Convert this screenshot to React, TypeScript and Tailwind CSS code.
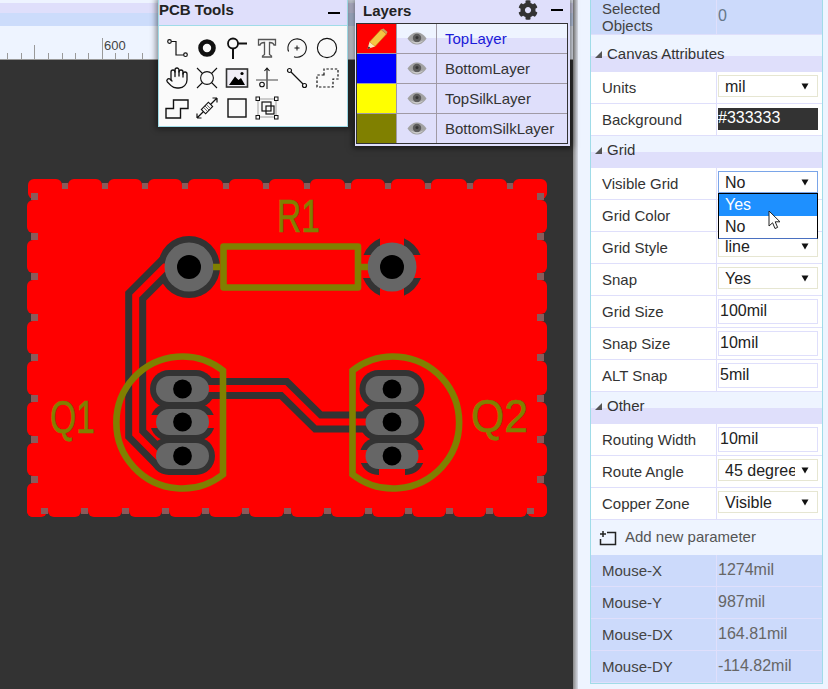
import { Hand } from "lucide-react"
import { FaCog } from "react-icons/fa"
import type { ReactNode } from "react"

const silk = "#808000"
const clearance = "#333333"
const copper = "#ff0000"
const gapColor = "#8a5a5a"

const topGaps = [62, 102, 142, 182, 223, 263, 304, 345, 385, 425, 467, 507]
const bottomGaps = [41, 81, 122, 162, 202, 242, 284, 324, 365, 405, 446, 486, 527]
const sideGaps = [193, 233, 273, 314, 354, 395, 436, 476]

const trackA = "M189 267H164.7L135.7 296V434L157.5 456H182"
const trackB = "M182 388.5H284L318 422H392"

function Icon({ children }: { children: ReactNode }) {
  return (
    <svg width="24" height="24" viewBox="0 0 24 24" fill="none" stroke="#111" strokeWidth="1.2">
      {children}
    </svg>
  )
}

const tools: ReactNode[] = [
  <Icon key="route">
    <circle cx="4.5" cy="5.5" r="1.8" />
    <path d="M6.3 5.5H11V19H18.7" />
    <circle cx="20.5" cy="18.7" r="1.8" />
  </Icon>,
  <Icon key="via">
    <circle cx="12" cy="12" r="6.5" strokeWidth="4.6" />
  </Icon>,
  <Icon key="pad">
    <circle cx="8" cy="7.5" r="5" strokeWidth="1.8" />
    <path d="M13 7.5H22M8 12.5V23" strokeWidth="2" />
  </Icon>,
  <Icon key="text">
    <path d="M3.5 3.5H20.5V9H19C18.5 7 17.5 6.5 14.5 6.5V18.5L16.5 20V21H7.5V20L9.5 18.5V6.5C6.5 6.5 5.5 7 5 9H3.5Z" stroke="#555" strokeWidth="1.3" />
  </Icon>,
  <Icon key="arc">
    <path d="M3.6 15.5A9.2 9.2 0 1 1 9 20.7" strokeWidth="1.1" />
    <path d="M12 9.5V14.5M9.5 12H14.5" strokeWidth="1" />
  </Icon>,
  <Icon key="circle">
    <circle cx="12" cy="12" r="9.6" strokeWidth="1.1" />
  </Icon>,
  <Hand key="hand" size={24} strokeWidth={1.3} color="#111" />,
  <Icon key="hole">
    <circle cx="12" cy="12" r="6.4" strokeWidth="1.1" />
    <path d="M2 2L7.5 7.5M22 2L16.5 7.5M2 22L7.5 16.5M22 22L16.5 16.5" strokeWidth="1.1" />
  </Icon>,
  <Icon key="image">
    <rect x="1.5" y="3" width="21" height="18" fill="#f0eef6" stroke="#333" strokeWidth="1.6" />
    <path d="M4 19L10 10.5L13.5 14L16 12L20 19Z" fill="#000" stroke="none" />
    <circle cx="17" cy="7.5" r="1.6" fill="#000" stroke="none" />
  </Icon>,
  <Icon key="dimension">
    <path d="M12 2V23M9.5 5L12 2L14.5 5" strokeWidth="1.1" />
    <path d="M1 14H23" stroke="#666" strokeWidth="1.2" />
    <circle cx="7" cy="18.5" r="2.3" strokeWidth="1.1" />
  </Icon>,
  <Icon key="line">
    <circle cx="4.5" cy="4.5" r="2" />
    <path d="M6 6L18 18" />
    <circle cx="19.5" cy="19.5" r="2" />
  </Icon>,
  <Icon key="zone">
    <path d="M9 9V3H23V13H18V21H2V9Z" strokeDasharray="2.4 1.8" strokeWidth="1.2" />
  </Icon>,
  <Icon key="trace">
    <path d="M1 22V12.5H8.5V4H23V12.5H15.5V22Z" strokeWidth="1.4" />
  </Icon>,
  <Icon key="component">
    <path d="M2 22L22 2M2 22V17.5M2 22H6.5M22 2H17.5M22 2V6.5" strokeWidth="1.2" />
    <rect x="7" y="9" width="10" height="6" transform="rotate(-45 12 12)" fill="#fafafa" strokeWidth="1.1" />
    <path d="M10 10V14M12 9V15M14 10V14" transform="rotate(-45 12 12)" strokeWidth="0.9" stroke="#555" />
  </Icon>,
  <Icon key="rect">
    <rect x="3" y="3" width="18" height="18" strokeWidth="1.4" />
  </Icon>,
  <Icon key="group">
    <rect x="7" y="6" width="9" height="9" strokeWidth="1.2" />
    <rect x="11" y="10" width="8" height="8" strokeWidth="1.2" />
    <path d="M3 5V19M5 3H19M21 5V19M5 21H19" strokeWidth="0.7" stroke="#777" />
    <rect x="1" y="1" width="3.5" height="3.5" strokeWidth="1" fill="#fafafa" />
    <rect x="19.5" y="1" width="3.5" height="3.5" strokeWidth="1" fill="#fafafa" />
    <rect x="1" y="19.5" width="3.5" height="3.5" strokeWidth="1" fill="#fafafa" />
    <rect x="19.5" y="19.5" width="3.5" height="3.5" strokeWidth="1" fill="#fafafa" />
  </Icon>,
]

const layers = [
  { name: "TopLayer", color: "bg-[#ff0000]", active: true },
  { name: "BottomLayer", color: "bg-[#0000ff]" },
  { name: "TopSilkLayer", color: "bg-[#ffff00]" },
  { name: "BottomSilkLayer", color: "bg-[#808000]" },
]

function Eye() {
  return (
    <svg width="20" height="13" viewBox="0 0 20 13">
      <path d="M0.5 6.5C4 1.5 7 0.5 10 0.5S16 1.5 19.5 6.5C16 11.5 13 12.5 10 12.5S4 11.5 0.5 6.5Z" fill="#a2a2a2" />
      <circle cx="10" cy="6" r="4.2" fill="#5c5c5c" />
      <circle cx="10" cy="5.5" r="1.5" fill="#333" />
      <path d="M3 7.5C6 11 14 11 17 7.5C14 13 6 13 3 7.5Z" fill="#cfcfcf" />
    </svg>
  )
}

function Pencil() {
  return (
    <svg width="22" height="22" viewBox="0 0 22 22">
      <path d="M15 1.5L20.5 6L9 18.5L3.5 14Z" fill="#f5c542" stroke="#b8860b" strokeWidth="0.6" />
      <path d="M15 1.5L17.5 0.5L21.5 4L20.5 6Z" fill="#c9a25a" />
      <path d="M3.5 14L9 18.5L1.5 21Z" fill="#fbe7b5" />
      <path d="M2.6 18.5L4.5 20L1.5 21Z" fill="#222" />
    </svg>
  )
}

function Caret() {
  return (
    <svg width="8" height="7" viewBox="0 0 8 7" className="shrink-0">
      <path d="M0.5 0.5H7.5L4 6.5Z" fill="#111" />
    </svg>
  )
}

function SelectBox({ value, className = "border-[#e6e6d2]" }: { value: string; className?: string }) {
  return (
    <div className={`flex h-[22px] w-[100px] items-center justify-between border pl-[6px] pr-[8px] text-[16px] text-[#222] bg-white ${className}`}>
      <span className="block w-[70px] overflow-hidden whitespace-nowrap pt-[2px] leading-[18px]">{value}</span>
      <Caret />
    </div>
  )
}

function InputBox({ value }: { value: string }) {
  return (
    <div className="h-[25px] w-[100px] border border-[#dfdffb] bg-white pl-[1px] text-[16px] leading-[21px] text-[#222]">
      {value}
    </div>
  )
}

function Row({ label, children }: { label: string; children?: ReactNode }) {
  return (
    <div className="flex h-[32px] border-b border-[#dfdffb] bg-white">
      <div className="flex w-[126px] items-center border-r border-[#dfdffb] pl-[11px] pt-px text-[15px] text-[#333]">{label}</div>
      <div className="relative flex flex-1 items-start pl-[1px] pt-[3px]">{children}</div>
    </div>
  )
}

function Group({ label }: { label: string }) {
  return (
    <div className="relative h-[32px] bg-[linear-gradient(#eef4ff_50%,#dfdffb_50%)]">
      <div className="flex items-center gap-[5px] pl-[4px] pt-[6px] text-[15px] leading-[16px] text-[#333]">
        <svg width="7" height="7" viewBox="0 0 7 7">
          <path d="M7 0V7H0Z" fill="#555" />
        </svg>
        {label}
      </div>
    </div>
  )
}

function MouseRow({ label, value }: { label: string; value: string }) {
  return (
    <div className="flex h-[32px] border-b border-[#dfdffb] bg-[#ccdafb]">
      <div className="flex w-[126px] items-center border-r border-[#dfdffb] pl-[11px] pt-px text-[15px] text-[#444]">{label}</div>
      <div className="pl-px pt-[5px] text-[16px] leading-[20px] text-[#666]">{value}</div>
    </div>
  )
}

function Capsule({ cx, cy, grow, fill }: { cx: number; cy: number; grow: number; fill: string }) {
  return <rect x={cx - 26.5 - grow} y={cy - 13 - grow} width={53 + grow * 2} height={26 + grow * 2} rx={13 + grow} fill={fill} />
}

function Board() {
  return (
    <svg width="573" height="629" viewBox="0 60 573 629" className="block">
      <rect x="38" y="189" width="499" height="319" fill={copper} />
      {[28, ...topGaps.map((x) => x + 6)].map((x, i, all) => (
        <rect key={x} x={x} y="179" width={(all[i + 1] ?? 553) - x - 6} height="20" rx="6" fill={copper} />
      ))}
      {[27, ...bottomGaps.map((x) => x + 7)].map((x, i, all) => (
        <rect key={x} x={x} y="497" width={(all[i + 1] ?? 554) - x - 7} height="20" rx="6" fill={copper} />
      ))}
      {sideGaps.map((gap) => gap + 7).map((y, i, all) => (
        <g key={y}>
          <rect x="27" y={y} width="20" height={(all[i + 1] ?? 524) - y - 7} rx="6" fill={copper} />
          <rect x="527" y={y} width="20" height={(all[i + 1] ?? 524) - y - 7} rx="6" fill={copper} />
        </g>
      ))}
      {topGaps.map((x) => <rect key={x} x={x} y="183" width="6" height="6" fill={gapColor} />)}
      {bottomGaps.map((x) => <rect key={x} x={x} y="508" width="7" height="6" fill={gapColor} />)}
      {sideGaps.map((y) => (
        <g key={y}>
          <rect x="31" y={y} width="7" height="7" fill={gapColor} />
          <rect x="537" y={y} width="7" height="7" fill={gapColor} />
        </g>
      ))}

      {/* thermal pads sit under the solid clearances */}
      <circle cx="392" cy="267" r="31" fill={clearance} />
      <rect x="355" y="255" width="74" height="23" fill={copper} />
      <rect x="380" y="230" width="24" height="74" fill={copper} />
      <Capsule cx={182.5} cy={422} grow={6} fill={clearance} />
      <rect x="145" y="415" width="75" height="13" fill={copper} />
      <Capsule cx={392} cy={456} grow={6} fill={clearance} />
      <rect x="358" y="450" width="68" height="13" fill={copper} />
      <rect x="379" y="456" width="26" height="26" fill={copper} />

      {/* tracks */}
      <path d={trackA} fill="none" stroke={clearance} strokeWidth="21" />
      <path d={trackB} fill="none" stroke={clearance} strokeWidth="21" />
      <circle cx="189" cy="267" r="31" fill={clearance} />
      <Capsule cx={182.5} cy={389} grow={6} fill={clearance} />
      <Capsule cx={182.5} cy={456} grow={6} fill={clearance} />
      <Capsule cx={392} cy={389} grow={6} fill={clearance} />
      <Capsule cx={392} cy={422} grow={6} fill={clearance} />
      <path d={trackA} fill="none" stroke={copper} strokeWidth="7" />
      <path d={trackB} fill="none" stroke={copper} strokeWidth="7" />

      {/* pads */}
      {[189, 392].map((cx) => (
        <g key={cx}>
          <circle cx={cx} cy="267" r="24.5" fill="#666666" />
          <circle cx={cx} cy="267" r="12" fill="#000" />
        </g>
      ))}
      {[182.5, 392].map((cx) =>
        [389, 422, 456].map((cy) => (
          <g key={`${cx}-${cy}`}>
            <Capsule cx={cx} cy={cy} grow={0} fill="#666666" />
            <circle cx={cx} cy={cy} r="9.4" fill="#000" />
          </g>
        )),
      )}

      {/* silk */}
      <g fill="none" stroke={silk} strokeWidth="6.6">
        <rect x="223.5" y="246.5" width="134.5" height="41" strokeLinejoin="round" />
        <path d="M213 267H220M361 267H368" />
        <path d="M223 370.5A66 66 0 1 0 223 474.5Z" />
        <path d="M352.5 370.5A66 66 0 1 1 352.5 474.5Z" />
      </g>
      <g fill={silk} stroke={silk} strokeWidth="0.6" fontFamily="Liberation Sans, Arial, sans-serif" fontSize="46">
        <text x="277" y="232" textLength="43" lengthAdjust="spacingAndGlyphs">R1</text>
        <text x="50" y="433" textLength="45" lengthAdjust="spacingAndGlyphs">Q1</text>
        <text x="471" y="432" textLength="57" lengthAdjust="spacingAndGlyphs">Q2</text>
      </g>
    </svg>
  )
}

function Ruler() {
  const ticks = [7, 21, 34, 48, 62, 75, 88, 102, 115, 128, 142]
  return (
    <svg width="573" height="32" viewBox="0 28 573 32" className="block">
      {ticks.map((x) => (
        <line key={x} x1={x + 0.5} x2={x + 0.5} y1={x === 102 ? 38 : x === 34 ? 45 : 53} y2="60" stroke="#9a9a9a" />
      ))}
      <text x="104" y="50" fontSize="13" fill="#444" fontFamily="Liberation Sans, Arial, sans-serif">600</text>
    </svg>
  )
}

export default function App() {
  return (
    <div className="relative flex h-[689px] w-[828px] overflow-hidden bg-[#eef4ff] font-['Liberation_Sans',Arial,sans-serif]">
      {/* canvas side */}
      <div className="flex w-[573px] flex-col bg-[#333333]">
        <div className="h-[3px] bg-[#eef4ff]" />
        <div className="h-[10px] bg-[#dfdffb]" />
        <div className="h-[13px] bg-[#ccdcfb]" />
        <div className="h-[2px] bg-[#eef4ff]" />
        <div className="h-[32px] border-b border-[#999999] bg-[#eef4ff]">
          <Ruler />
        </div>
        <Board />
      </div>

      <div className="w-[5px] bg-[linear-gradient(90deg,#888888,#d8dce6)]" />

      {/* properties */}
      <div className="w-[250px] pl-[12px]">
        <div className="w-[233px] border-x border-[#a0dce8]">
          <div className="flex h-[35px] border-b border-[#dfdffb] bg-[#ccdafb] text-[15px] leading-[17px] text-[#444]">
            <div className="w-[126px] border-r border-[#dfdffb] pl-[11px]">Selected<br />Objects</div>
            <div className="pl-px pt-[7px] text-[16px] text-[#667788]">0</div>
          </div>
          <div className="h-[37px] bg-[linear-gradient(#eef4ff_21px,#dfdffb_21px)] pl-[4px] pt-[11px]">
            <div className="flex items-center gap-[5px] text-[15px] leading-[16px] text-[#333]">
              <svg width="7" height="7" viewBox="0 0 7 7"><path d="M7 0V7H0Z" fill="#555" /></svg>
              Canvas Attributes
            </div>
          </div>
          <Row label="Units"><SelectBox value="mil" /></Row>
          <Row label="Background">
            <div className="mt-px h-[22px] w-[100px] bg-[#333333] text-[16px] leading-[20px] text-white">#333333</div>
          </Row>
          <Group label="Grid" />
          <Row label="Visible Grid">
            <SelectBox value="No" className="border-[#7aa5e8]" />
            <div className="absolute left-[1px] top-[25px] z-10 w-[100px] border border-black border-b-[#4a70c0] bg-white text-[16px] leading-[22px] text-[#222]">
              <div className="bg-[#1e90ff] pl-[6px] text-white">Yes</div>
              <div className="pl-[6px]">No</div>
              <svg width="15" height="20" viewBox="0 0 15 20" className="absolute left-[49px] top-[16px]">
                <path d="M1 1V16L4.6 12.8L7 18.5L9.6 17.4L7.2 11.8H12Z" fill="#fff" stroke="#222" strokeWidth="1" />
              </svg>
            </div>
          </Row>
          <Row label="Grid Color" />
          <Row label="Grid Style"><SelectBox value="line" /></Row>
          <Row label="Snap"><SelectBox value="Yes" /></Row>
          <Row label="Grid Size"><InputBox value="100mil" /></Row>
          <Row label="Snap Size"><InputBox value="10mil" /></Row>
          <Row label="ALT Snap"><InputBox value="5mil" /></Row>
          <Group label="Other" />
          <Row label="Routing Width"><InputBox value="10mil" /></Row>
          <Row label="Route Angle"><SelectBox value="45 degree" /></Row>
          <Row label="Copper Zone"><SelectBox value="Visible" /></Row>
          <div className="flex h-[35px] items-center bg-[#eef4ff] pl-[8px] text-[15px] text-[#555]">
            <svg width="18" height="16" viewBox="0 0 18 16" className="mr-[8px]">
              <path d="M8 2.5H16.5V14.5H1.5V9" fill="none" stroke="#222" strokeWidth="1.5" />
              <path d="M4 1V7M1 4H7" stroke="#222" strokeWidth="1.5" />
            </svg>
            Add new parameter
          </div>
          <MouseRow label="Mouse-X" value="1274mil" />
          <MouseRow label="Mouse-Y" value="987mil" />
          <MouseRow label="Mouse-DX" value="164.81mil" />
          <MouseRow label="Mouse-DY" value="-114.82mil" />
          <div className="h-px bg-[#a0dce8]" />
        </div>
      </div>

      {/* floating palettes */}
      <div className="absolute left-[158px] top-0 h-[127px] w-[190px] border-x border-b border-[#a0dce8] bg-[#fafafa] shadow-[0_0_6px_2px_rgba(0,0,0,0.45)]">
        <div className="flex h-[26px] items-start justify-between border-b border-[#a0dce8] bg-[#dfdffb] pr-[7px] text-[15px] font-bold leading-[20px] text-[#222]">
          <span>PCB Tools</span>
          <span className="mt-[12px] h-[2px] w-[12px] bg-black" />
        </div>
        <div className="grid grid-cols-[repeat(6,30px)] grid-rows-[repeat(3,30px)] place-items-center pl-[3px] pt-[7px]">
          {tools}
        </div>
      </div>

      <div className="absolute left-[355px] top-0 h-[146px] w-[215px] bg-[#dfdffb] shadow-[0_0_6px_2px_rgba(0,0,0,0.55)]">
        <div className="flex h-[23px] items-center pl-[8px] pr-[7px] text-[15px] font-bold text-[#222]">
          <span>Layers</span>
          <FaCog size={20} color="#333" className="ml-auto mr-[13px] -mt-[3px]" />
          <span className="-mt-[3px] h-[2px] w-[12px] bg-black" />
        </div>
        <div className="ml-px w-[212px] border border-[#333333]">
          {layers.map((layer) => (
            <div key={layer.name} className="flex h-[30px] border-b border-[#a09aa5] last:h-[29px] last:border-b-0">
              <div className={`flex w-[40px] items-center justify-center border-r border-[#a09aa5] ${layer.color}`}>
                {layer.active && <Pencil />}
              </div>
              <div className={`flex w-[40px] items-center justify-center border-r border-[#a09aa5] ${layer.active ? "bg-[linear-gradient(#eef4ff_50%,#dfdffb_50%)]" : ""}`}>
                <Eye />
              </div>
              <div className={`flex-1 pl-[8px] text-[15px] leading-[29px] ${layer.active ? "bg-[linear-gradient(#eef4ff_50%,#dfdffb_50%)] text-[#1a1ad8]" : "text-[#333]"}`}>
                {layer.name}
              </div>
            </div>
          ))}
        </div>
      </div>
    </div>
  )
}
